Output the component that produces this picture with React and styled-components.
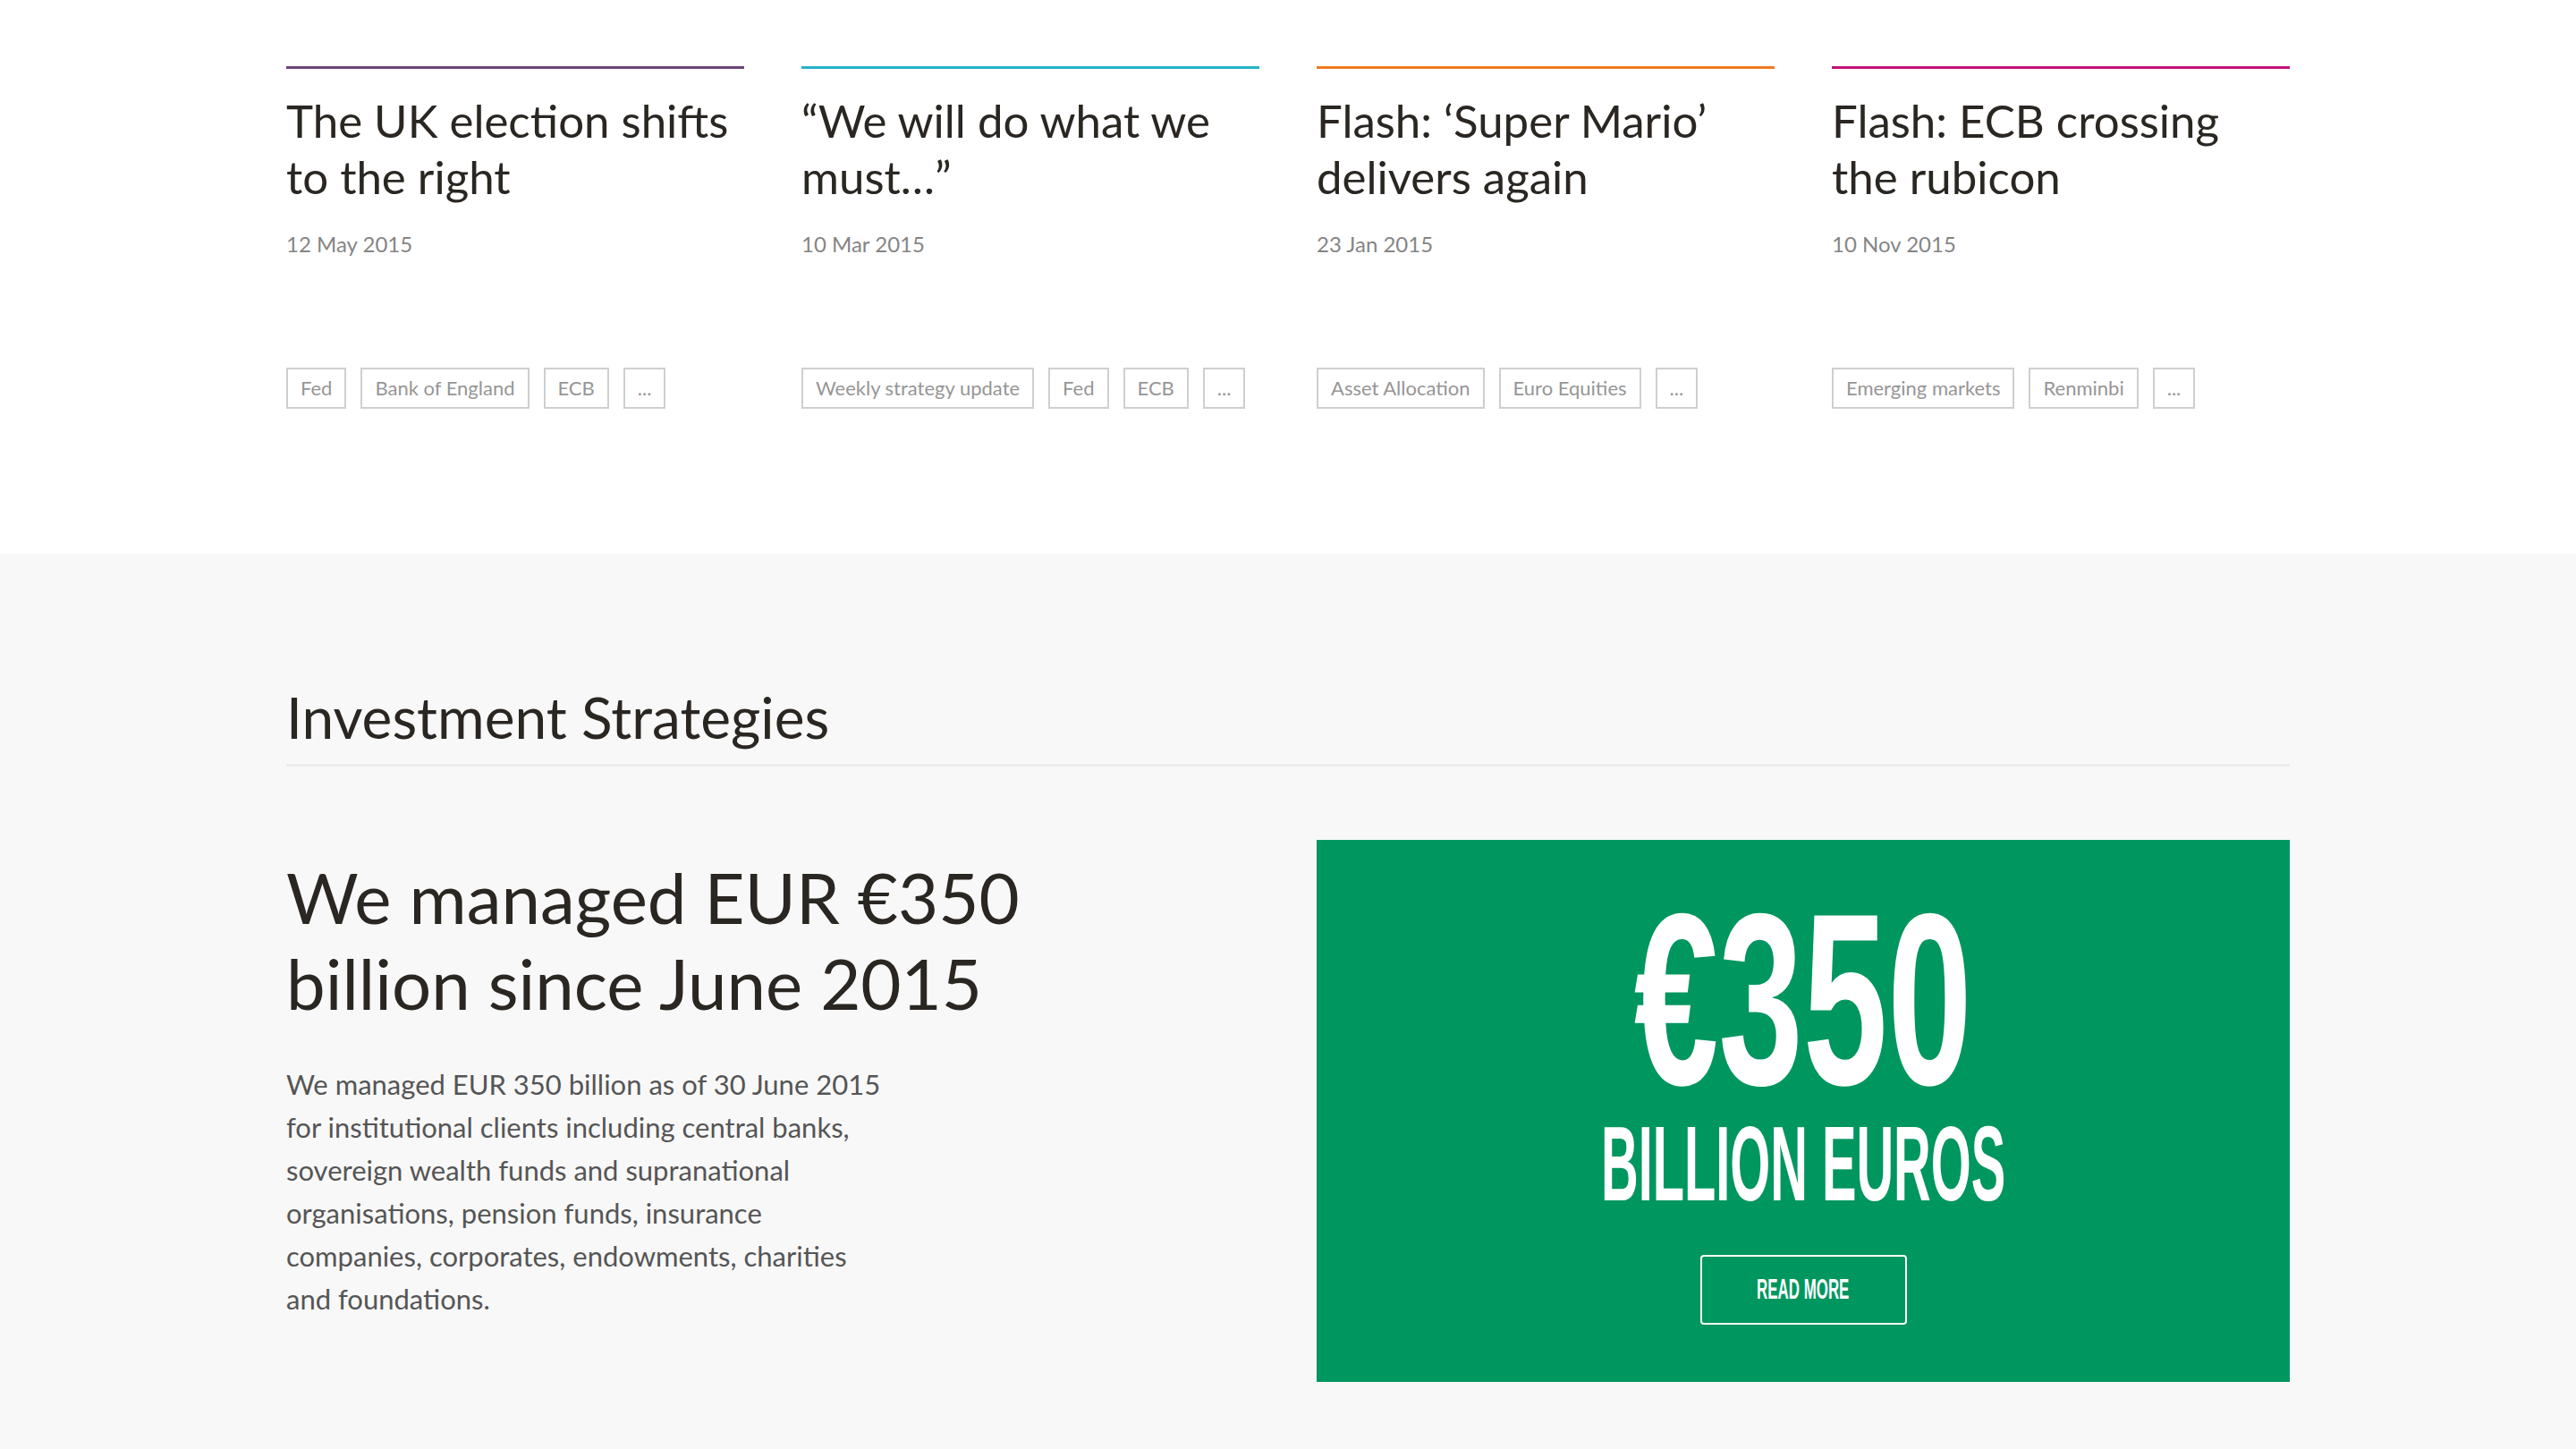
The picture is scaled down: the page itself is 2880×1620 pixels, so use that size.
import React from 'react';
import styled, { createGlobalStyle } from 'styled-components';

const GlobalStyle = createGlobalStyle`
    * {
        box-sizing: border-box;
    }

    body {
        margin: 0;
        background: #ffffff;
        font-family: Lato, "Liberation Sans", sans-serif;
        color: #2a2622;
    }
`;

const articles = [
    {
        title: 'The UK election shifts\nto the right',
        date: '12 May 2015',
        color: '#6d4479',
        tags: ['Fed', 'Bank of England', 'ECB', '...'],
    },
    {
        title: '“We will do what we\nmust…”',
        date: '10 Mar 2015',
        color: '#27b2c8',
        tags: ['Weekly strategy update', 'Fed', 'ECB', '...'],
    },
    {
        title: 'Flash: ‘Super Mario’\ndelivers again',
        date: '23 Jan 2015',
        color: '#ee7a24',
        tags: ['Asset Allocation', 'Euro Equities', '...'],
    },
    {
        title: 'Flash: ECB crossing\nthe rubicon',
        date: '10 Nov 2015',
        color: '#c3137b',
        tags: ['Emerging markets', 'Renminbi', '...'],
    },
];

const Container = styled.div`
    width: 2240px;
    margin: 0 auto;
`;

const NewsSection = styled.section`
    padding: 74px 0 162px;
    background: #ffffff;
`;

const CardGrid = styled.div`
    display: grid;
    grid-template-columns: repeat(4, 1fr);
    gap: 64px;
`;

const Card = styled.article`
    border-top: 3px solid ${({ accent }) => accent};
`;

const CardTitle = styled.h3`
    margin: 26px 0 0;
    font-size: 51px;
    line-height: 63px;
    font-weight: 400;
    white-space: pre-line;
    color: #2a2622;
`;

const CardDate = styled.div`
    margin-top: 29px;
    font-size: 24px;
    line-height: 30px;
    color: #858585;
`;

const TagList = styled.ul`
    display: flex;
    flex-wrap: wrap;
    gap: 16px;
    margin: 123px 0 0;
    padding: 0;
    list-style: none;
`;

const Tag = styled.li`
    height: 46px;
    padding: 0 14px;
    border: 2px solid #cfcfcf;
    font-size: 22px;
    line-height: 42px;
    color: #969696;
`;

const StrategySection = styled.section`
    padding: 145px 0 140px;
    background: #f8f8f8;
`;

const SectionTitle = styled.h2`
    margin: 0;
    padding-bottom: 14px;
    border-bottom: 3px solid #ececec;
    font-size: 64px;
    line-height: 76px;
    font-weight: 400;
    color: #2a2622;
`;

const StrategyGrid = styled.div`
    display: grid;
    grid-template-columns: 1fr 1fr;
    gap: 64px;
    margin-top: 82px;
`;

const Intro = styled.div`
    padding-top: 16px;
`;

const BigHeading = styled.h1`
    margin: 0;
    font-size: 78px;
    line-height: 96px;
    font-weight: 400;
    color: #2a2622;
`;

const Body = styled.p`
    margin: 41px 0 0;
    font-size: 31px;
    line-height: 48px;
    color: #555555;
`;

const FigureBox = styled.div`
    display: flex;
    flex-direction: column;
    align-items: center;
    padding: 48px 0 64px;
    background: #00965f;
    color: #ffffff;
    font-family: "Liberation Sans", Arial, sans-serif;
    font-weight: 700;
    text-align: center;
`;

const Squeezed = styled.span`
    display: inline-block;
    white-space: nowrap;
    transform: scaleX(${({ squeeze }) => squeeze});
    transform-origin: center;
`;

const Amount = styled.div`
    font-size: 274px;
    line-height: 260px;
`;

const Unit = styled.div`
    margin-top: 4px;
    font-size: 119px;
    line-height: 100px;
`;

const ReadMore = styled.a`
    display: flex;
    align-items: center;
    justify-content: center;
    width: 231px;
    height: 78px;
    margin-top: 52px;
    border: 2px solid #ffffff;
    border-radius: 4px;
    font-size: 31px;
    color: #ffffff;
    text-decoration: none;
`;

const App = () => (
    <>
        <GlobalStyle />
        <NewsSection>
            <Container>
                <CardGrid>
                    {articles.map((item) => (
                        <Card key={item.title} accent={item.color}>
                            <CardTitle>{item.title}</CardTitle>
                            <CardDate>{item.date}</CardDate>
                            <TagList>
                                {item.tags.map((tag, i) => <Tag key={i}>{tag}</Tag>)}
                            </TagList>
                        </Card>
                    ))}
                </CardGrid>
            </Container>
        </NewsSection>
        <StrategySection>
            <Container>
                <SectionTitle>Investment Strategies</SectionTitle>
                <StrategyGrid>
                    <Intro>
                        <BigHeading>
                            We managed EUR €350<br />billion since June 2015
                        </BigHeading>
                        <Body>
                            We managed EUR 350 billion as of 30 June 2015<br />
                            for institutional clients including central banks,<br />
                            sovereign wealth funds and supranational<br />
                            organisations, pension funds, insurance<br />
                            companies, corporates, endowments, charities<br />
                            and foundations.
                        </Body>
                    </Intro>
                    <FigureBox>
                        <Amount><Squeezed squeeze={0.62}>€350</Squeezed></Amount>
                        <Unit><Squeezed squeeze={0.485}>BILLION EUROS</Squeezed></Unit>
                        <ReadMore href="#"><Squeezed squeeze={0.545}>READ MORE</Squeezed></ReadMore>
                    </FigureBox>
                </StrategyGrid>
            </Container>
        </StrategySection>
    </>
);

export default App;
